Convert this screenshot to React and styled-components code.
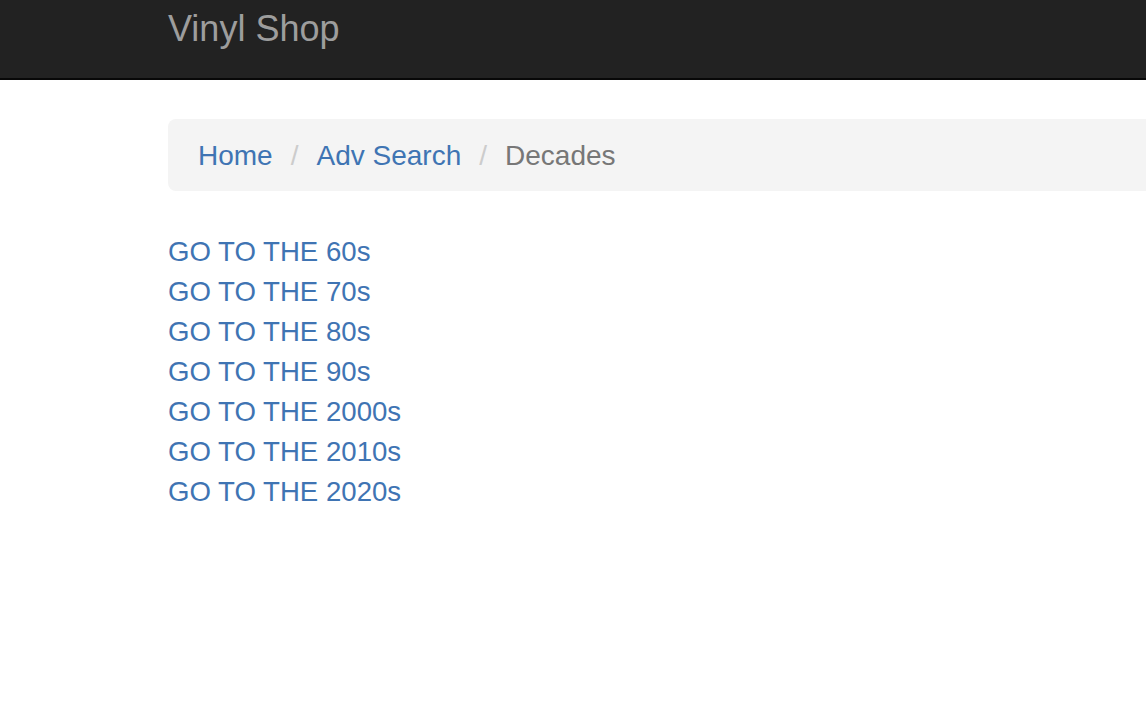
import React from 'react'
import styled, { createGlobalStyle } from 'styled-components'

const GlobalStyle = createGlobalStyle`
  html, body {
    margin: 0;
    padding: 0;
    background: #fff;
    overflow-x: hidden;
  }
  body {
    font-family: "Liberation Sans", Arial, Helvetica, sans-serif;
    font-size: 28px;
    line-height: 40px;
    color: #333;
  }
`

const Navbar = styled.nav`
  height: 78px;
  background: #222;
  border-bottom: 2px solid #080808;
  margin-bottom: 39px;
`

const NavInner = styled.div`
  padding-left: 168px;
  padding-top: 9px;
`

const Brand = styled.a`
  display: inline-block;
  font-size: 36px;
  line-height: 40px;
  color: #9d9d9d;
  text-decoration: none;
`

const Container = styled.div`
  padding-left: 168px;
`

// the breadcrumb runs off the right side of the window in the screenshot
const Breadcrumb = styled.ol`
  display: flex;
  list-style: none;
  margin: 0 0 40px 0;
  padding: 17px 30px 15px;
  background: #f4f4f4;
  border-radius: 8px 0 0 8px;
`

const Crumb = styled.li`
  color: ${p => (p.$active ? '#777' : '#3f74b3')};

  &:not(:first-child)::before {
    content: '/';
    color: #ccc;
    padding: 0 18px 0 18px;
  }
`

const CrumbLink = styled.a`
  color: #3f74b3;
  text-decoration: none;
`

const DecadeList = styled.div`
  display: flex;
  flex-direction: column;
  padding-top: 1px;
`

const DecadeLink = styled.a`
  align-self: flex-start;
  color: #3f74b3;
  text-decoration: none;
  font-size: 27.6px;
`

const decades = ['60s', '70s', '80s', '90s', '2000s', '2010s', '2020s']

export default function App() {
  return (
    <>
      <GlobalStyle />
      <Navbar>
        <NavInner>
          <Brand href="#">Vinyl Shop</Brand>
        </NavInner>
      </Navbar>
      <Container>
        <Breadcrumb>
          <Crumb><CrumbLink href="#">Home</CrumbLink></Crumb>
          <Crumb><CrumbLink href="#">Adv Search</CrumbLink></Crumb>
          <Crumb $active>Decades</Crumb>
        </Breadcrumb>
        <DecadeList>
          {decades.map(d => (
            <DecadeLink key={d} href="#">GO TO THE {d}</DecadeLink>
          ))}
        </DecadeList>
      </Container>
    </>
  )
}
